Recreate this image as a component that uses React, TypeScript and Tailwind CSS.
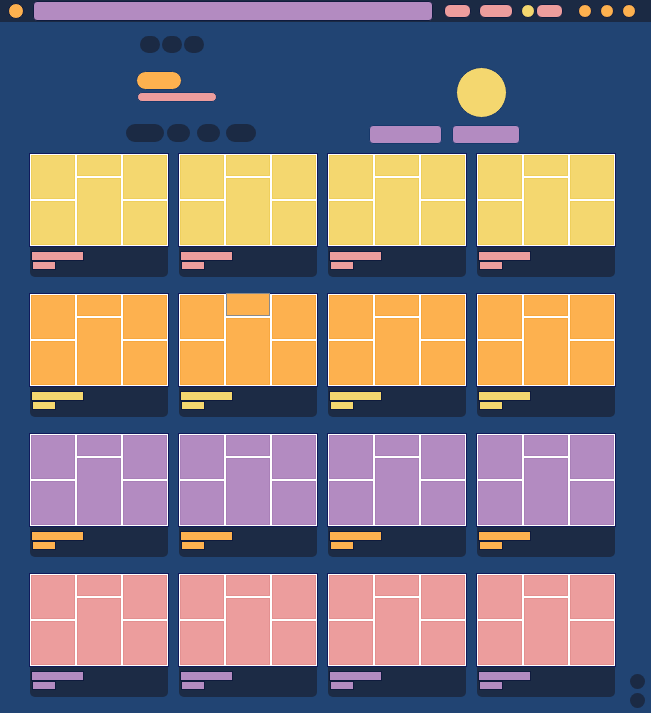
import React from "react";

type Theme = { cell: string; edge: string; bar: string };

const themes: Theme[] = [
  { cell: "bg-[#f4d76f]", edge: "border-[#efcf5c]", bar: "bg-[#ec9d9d]" },
  { cell: "bg-[#fdb14f]", edge: "border-[#f7a83f]", bar: "bg-[#f4d76f]" },
  { cell: "bg-[#b38bc1]", edge: "border-[#a980b8]", bar: "bg-[#fdb14f]" },
  { cell: "bg-[#ec9d9d]", edge: "border-[#e39090]", bar: "bg-[#b38bc1]" },
];

function Card({ t, raised }: { t: Theme; raised?: boolean }) {
  const cell = `${t.cell} border ${t.edge}`;
  return (
    <div className="flex w-[140px] flex-col">
      <div className="grid h-[94px] grid-cols-3 gap-[2px] border border-[#101a5c] bg-white p-px">
        <div className="flex flex-col gap-[2px]">
          <div className={`flex-1 ${cell}`} />
          <div className={`flex-1 ${cell}`} />
        </div>
        <div className="flex flex-col gap-[2px]">
          {raised ? (
            <div className={`-mt-[2px] h-[23px] ${t.cell} border border-[#8a8a8a]`} />
          ) : (
            <div className={`h-[21px] ${cell}`} />
          )}
          <div className={`flex-1 ${cell}`} />
        </div>
        <div className="flex flex-col gap-[2px]">
          <div className={`flex-1 ${cell}`} />
          <div className={`flex-1 ${cell}`} />
        </div>
      </div>
      <div className="mx-px flex h-[30px] flex-col rounded-b-[5px] bg-[#1c2b45] pl-px pt-[4px]">
        <div className={`h-[10px] w-[53px] border border-[#0f1b3d] ${t.bar}`} />
        <div className={`ml-px h-[9px] w-[24px] border border-[#0f1b3d] ${t.bar}`} />
      </div>
    </div>
  );
}

export default function App() {
  return (
    <div className="relative h-[713px] w-[651px] overflow-hidden bg-[#214473]">
      {/* top bar */}
      <div className="flex h-[22px] items-center bg-[#1b2a44]">
        <div className="ml-[8px] h-[16px] w-[16px] rounded-full border border-[#0f1b3d] bg-[#fdb14f]" />
        <div className="ml-[9px] h-[20px] w-[400px] rounded-[4px] border border-[#0f1b3d] bg-[#b38bc1]" />
        <div className="ml-[11px] h-[14px] w-[27px] rounded-[6px] border border-[#0f1b3d] bg-[#ec9d9d]" />
        <div className="ml-[8px] h-[14px] w-[34px] rounded-[6px] border border-[#0f1b3d] bg-[#ec9d9d]" />
        <div className="ml-[8px] h-[14px] w-[14px] rounded-full border border-[#0f1b3d] bg-[#f4d76f]" />
        <div className="ml-px h-[14px] w-[27px] rounded-[6px] border border-[#0f1b3d] bg-[#ec9d9d]" />
        <div className="ml-[15px] h-[14px] w-[14px] rounded-full border border-[#0f1b3d] bg-[#fdb14f]" />
        <div className="ml-[8px] h-[14px] w-[14px] rounded-full border border-[#0f1b3d] bg-[#fdb14f]" />
        <div className="ml-[8px] h-[14px] w-[14px] rounded-full border border-[#0f1b3d] bg-[#fdb14f]" />
      </div>

      {/* hero */}
      <div className="flex items-start">
        <div className="ml-[126px] flex flex-col">
          <div className="ml-[14px] mt-[14px] flex gap-[2px]">
            <div className="h-[17px] w-[20px] rounded-full bg-[#1b2a44]" />
            <div className="h-[17px] w-[20px] rounded-full bg-[#1b2a44]" />
            <div className="h-[17px] w-[20px] rounded-full bg-[#1b2a44]" />
          </div>
          <div className="ml-[10px] mt-[18px] h-[19px] w-[46px] rounded-full border border-[#17386a] bg-[#fdb14f]" />
          <div className="ml-[11px] mt-[2px] h-[10px] w-[80px] rounded-full border border-[#17386a] bg-[#ec9d9d]" />
          <div className="mt-[22px] flex gap-[3px]">
            <div className="h-[18px] w-[38px] rounded-full bg-[#1b2a44]" />
            <div className="h-[18px] w-[23px] rounded-full bg-[#1b2a44]" />
            <div className="ml-[4px] h-[18px] w-[23px] rounded-full bg-[#1b2a44]" />
            <div className="ml-[3px] h-[18px] w-[30px] rounded-full bg-[#1b2a44]" />
          </div>
        </div>
        <div className="ml-[113px] flex flex-col">
          <div className="ml-[87px] mt-[45px] h-[51px] w-[51px] rounded-full border border-[#17386a] bg-[#f4d76f]" />
          <div className="mt-[7px] flex gap-[10px]">
            <div className="h-[19px] w-[73px] rounded-[4px] border border-[#17386a] bg-[#b38bc1]" />
            <div className="h-[19px] w-[68px] rounded-[4px] border border-[#17386a] bg-[#b38bc1]" />
          </div>
        </div>
      </div>

      {/* cards */}
      <div className="mt-[9px] grid grid-cols-[repeat(4,140px)] gap-x-[9px] gap-y-[16px] pl-[29px]">
        {themes.map((t, r) =>
          [0, 1, 2, 3].map((c) => (
            <Card key={`${r}-${c}`} t={t} raised={r === 1 && c === 1} />
          ))
        )}
      </div>

      {/* floating dots */}
      <div className="absolute bottom-[5px] right-[6px] flex flex-col gap-[4px]">
        <div className="h-[15px] w-[15px] rounded-full bg-[#1b2a44]" />
        <div className="h-[15px] w-[15px] rounded-full bg-[#1b2a44]" />
      </div>
    </div>
  );
}
